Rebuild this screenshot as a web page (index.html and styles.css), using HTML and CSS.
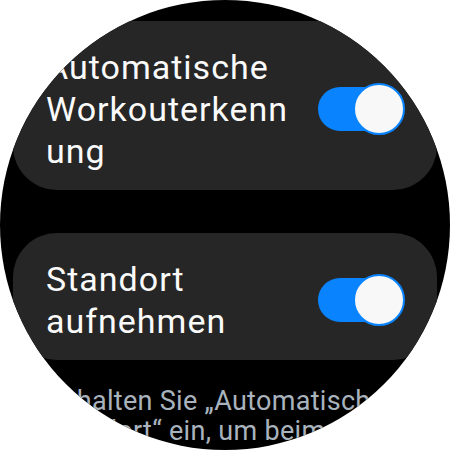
FILE: index.html
```html
<!DOCTYPE html>
<html lang="de">
<head>
<meta charset="utf-8">
<title>Workout-Einstellungen</title>
<link rel="stylesheet" href="styles.css">
</head>
<body>
<div class="watch">
  <div class="screen">
    <div class="card">
      <div class="label">Automatische Workouterkenn ung</div>
      <div class="switch on"><span class="track"></span><span class="knob"></span></div>
    </div>
    <div class="card">
      <div class="label">Standort aufnehmen</div>
      <div class="switch on"><span class="track"></span><span class="knob"></span></div>
    </div>
    <p class="hint">Schalten Sie „Automatischer Standort“ ein, um beim Training Ihre Route aufzuzeichnen.</p>
  </div>
</div>
</body>
</html>
```
FILE: styles.css
```css
html, body {
  margin: 0;
  padding: 0;
  background: #ffffff;
}
.watch {
  width: 450px;
  height: 450px;
  border-radius: 50%;
  overflow: hidden;
  background: #000000;
  font-family: Roboto, "Liberation Sans", sans-serif;
}
.screen {
  padding: 21px 13px 0;
  display: flex;
  flex-direction: column;
}
.card {
  background: #262626;
  border-radius: 44px;
  padding: 25px 32px 18px 33px;
  display: flex;
  align-items: center;
  gap: 12px;
}
.card + .card {
  margin-top: 43px;
}
.label {
  flex: 1;
  color: #fafafa;
  font-size: 34px;
  line-height: 42px;
  letter-spacing: 1px;
  width: 240px;
}
.switch {
  position: relative;
  width: 87px;
  height: 52px;
  flex: none;
}
.track {
  position: absolute;
  left: 0;
  top: 4px;
  width: 80px;
  height: 44px;
  border-radius: 22px;
  background: #0a84fe;
}
.knob {
  position: absolute;
  right: 0;
  top: 0;
  width: 48px;
  height: 48px;
  border-radius: 50%;
  background: #f8f8f8;
  border: 2px solid #0a84fe;
}
.hint {
  margin: 26px 20px 0 33px;
  color: #a9b3bd;
  font-size: 27px;
  line-height: 30px;
  letter-spacing: 0.3px;
}
```
